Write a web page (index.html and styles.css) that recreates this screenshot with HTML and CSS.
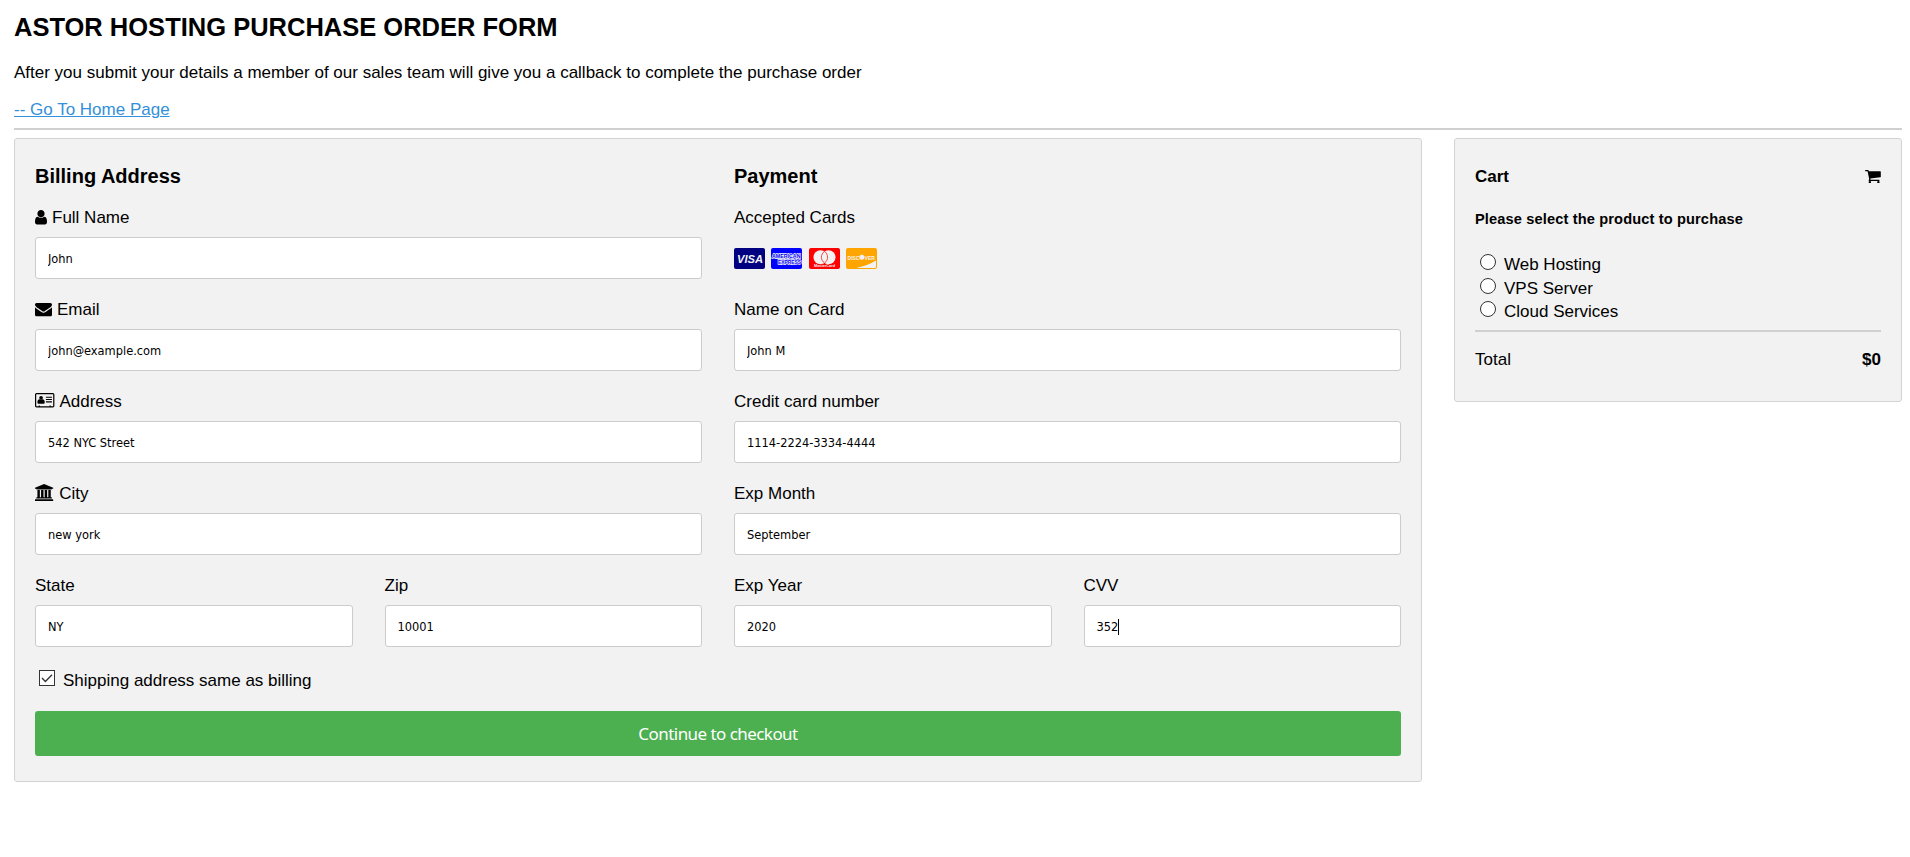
FILE: index.html
```html
<!DOCTYPE html>
<html lang="en">
<head>
<meta charset="utf-8">
<title>Astor Hosting Purchase Order Form</title>
<link rel="stylesheet" href="styles.css">
</head>
<body>
<header class="page-header">
  <h2 class="title"><span>ASTOR HOSTING PURCHASE ORDER FORM</span></h2>
  <p class="intro">After you submit your details a member of our sales team will give you a callback to complete the purchase order</p>
  <a class="home-link" href="#">-- Go To Home Page</a>
</header>
<hr class="rule">
<main class="layout">
  <form class="panel">
    <div class="columns">
      <section>
        <h3 class="heading">Billing Address</h3>
        <label class="label" for="fname"><svg class="icon icon-user" viewBox="256 128 1280 1536"><path d="M1536 1399q0 109-62.5 187t-150.5 78h-854q-88 0-150.5-78t-62.5-187q0-85 8.5-160.5t31.5-152 58.5-131 94-89 134.5-34.5q131 128 313 128t313-128q76 0 134.5 34.5t94 89 58.5 131 31.5 152 8.5 160.5zm-256-887q0 159-112.5 271.5t-271.5 112.5-271.5-112.5-112.5-271.5 112.5-271.5 271.5-112.5 271.5 112.5 112.5 271.5z"/></svg>Full Name</label>
        <input class="field" type="text" id="fname" value="John">
        <label class="label" for="email"><svg class="icon icon-mail" viewBox="0 256 1792 1408"><path d="M1792 710v794q0 66-47 113t-113 47h-1472q-66 0-113-47t-47-113v-794q44 49 101 87 362 246 497 345 57 42 92.5 65.5t94.5 48 110 24.5h2q51 0 110-24.5t94.5-48 92.5-65.5q170-123 498-345 57-39 100-87zm0-294q0 79-49 151t-122 123q-376 261-468 325-10 7-42.5 31t-54 38.5-52 32.5-57.5 27-50 9h-2q-23 0-50-9t-57.5-27-52-32.5-54-38.5-42.5-31q-91-64-262-182.5t-205-142.5q-62-42-117-115.5t-55-136.5q0-78 41.5-130t118.5-52h1472q65 0 112.5 47t47.5 113z"/></svg>Email</label>
        <input class="field" type="text" id="email" value="john@example.com">
        <label class="label" for="adr"><svg class="icon icon-card" viewBox="0 0 2048 1536"><path fill-rule="evenodd" d="M160 0h1728q66 0 113 47t47 113v1216q0 66-47 113t-113 47H160q-66 0-113-47T0 1376V160Q0 94 47 47T160 0zM160 128q-32 0-32 32v1216q0 32 32 32h224v-96h128v96h1024v-96h128v96h224q32 0 32-32V160q0-32-32-32z"/><circle cx="640" cy="512" r="195"/><path d="M512 660q128 100 256 0 256-10 256 330 0 130-110 130H366q-110 0-110-130 0-340 256-330zM1152 384h640v110h-640zM1152 630h640v110h-640zM1152 880h640v110h-640z"/></svg>Address</label>
        <input class="field" type="text" id="adr" value="542 NYC Street">
        <label class="label" for="city"><svg class="icon icon-city" viewBox="0 0 1920 1792"><path d="M960 0l960 384v128h-128q0 26-20.5 45t-48.5 19h-1526q-28 0-48.5-19t-20.5-45h-128v-128zm-704 640h256v768h128v-768h256v768h128v-768h256v768h128v-768h256v768h59q28 0 48.5 19t20.5 45v64h-1664v-64q0-26 20.5-45t48.5-19h59v-768zm1595 960q28 0 48.5 19t20.5 45v128h-1920v-128q0-26 20.5-45t48.5-19h1782z"/></svg>City</label>
        <input class="field" type="text" id="city" value="new york">
        <div class="columns">
          <div><label class="label" for="state">State</label><input class="field" type="text" id="state" value="NY"></div>
          <div><label class="label" for="zip">Zip</label><input class="field" type="text" id="zip" value="10001"></div>
        </div>
      </section>
      <section>
        <h3 class="heading">Payment</h3>
        <div class="label">Accepted Cards</div>
        <div class="cards">
          <svg class="card visa" viewBox="0 0 31 21"><rect width="31" height="21" rx="2"/><text x="3" y="14.7" textLength="26" lengthAdjust="spacingAndGlyphs" font-size="11.5" font-style="italic">VISA</text></svg>
          <svg class="card amex" viewBox="0 0 31 21"><rect width="31" height="21" rx="2"/><text x="1" y="9.6" textLength="28.5" lengthAdjust="spacingAndGlyphs" font-size="6">AMERICAN</text><text x="7" y="15.6" textLength="23" lengthAdjust="spacingAndGlyphs" font-size="5.6">EXPRESS</text></svg>
          <svg class="card master" viewBox="0 0 31 21"><rect width="31" height="21" rx="2"/><circle class="mark" cx="11.5" cy="9.2" r="7"/><circle class="mark" cx="19.5" cy="9.2" r="7"/><path class="lens" d="M15.5 3.4a7 7 0 0 1 0 11.6a7 7 0 0 1 0-11.6z"/><text x="5" y="19" textLength="21" lengthAdjust="spacingAndGlyphs" font-size="2.8">MasterCard</text></svg>
          <svg class="card discover" viewBox="0 0 31 21"><rect width="31" height="21" rx="2"/><path class="mark" d="M30 12.5v6.5a1 1 0 0 1-1 1H10.5Q22 17.5 30 12.5z"/><text x="1.6" y="11.5" textLength="12" lengthAdjust="spacingAndGlyphs" font-size="6">DISC</text><circle class="mark" cx="15.8" cy="9.3" r="2.5"/><text x="18.5" y="11.5" textLength="10.5" lengthAdjust="spacingAndGlyphs" font-size="6">VER</text></svg>
        </div>
        <label class="label" for="cname">Name on Card</label>
        <input class="field" type="text" id="cname" value="John M">
        <label class="label" for="ccnum">Credit card number</label>
        <input class="field" type="text" id="ccnum" value="1114-2224-3334-4444">
        <label class="label" for="expmonth">Exp Month</label>
        <input class="field" type="text" id="expmonth" value="September">
        <div class="columns">
          <div><label class="label" for="expyear">Exp Year</label><input class="field" type="text" id="expyear" value="2020"></div>
          <div><label class="label" for="cvv">CVV</label><div class="field focused" id="cvv">352<span class="caret"></span></div></div>
        </div>
      </section>
    </div>
    <label class="same"><svg class="check" viewBox="0 0 16 16"><rect x=".5" y=".5" width="15" height="15"/><path d="M3 8l3.4 3.5L13 4.8"/></svg>Shipping address same as billing</label>
    <button class="submit" type="button"><span>Continue to checkout</span></button>
  </form>
  <aside class="panel cart">
    <h4 class="cart-title">Cart<svg class="cart-icon" viewBox="64 256 1664 1408"><path d="M704 1536q0 52-38 90t-90 38-90-38-38-90 38-90 90-38 90 38 38 90zm896 0q0 52-38 90t-90 38-90-38-38-90 38-90 90-38 90 38 38 90zm128-1088v512q0 24-16.5 42.5t-40.5 21.5l-1044 122q13 60 13 70 0 16-24 64h920q26 0 45 19t19 45-19 45-45 19h-1024q-26 0-45-19t-19-45q0-11 8-31.5t16-36 21.5-40 15.5-29.5l-177-823h-204q-26 0-45-19t-19-45 19-45 45-19h256q16 0 28.5 6.5t19.5 15.5 13 24.5 8 26 5.5 29.5 4.5 26h1201q26 0 45 19t19 45z"/></svg></h4>
    <h5 class="cart-note">Please select the product to purchase</h5>
    <div class="options">
      <label class="option"><span class="radio"></span>Web Hosting</label>
      <label class="option"><span class="radio"></span>VPS Server</label>
      <label class="option"><span class="radio"></span>Cloud Services</label>
    </div>
    <hr class="rule">
    <p class="total">Total<b>$0</b></p>
  </aside>
</main>
</body>
</html>
```
FILE: styles.css
```css
* { box-sizing: border-box; }

body {
  margin: 0;
  padding: 13px 8px 0 14px;
  font: 17px/20px "Liberation Sans", Arial, sans-serif;
  color: #000;
  background: #fff;
}

.title { margin: 0 0 21px; font-size: 25.5px; line-height: 29px; }
.intro { margin: 0 0 17px; }
.home-link { display: block; width: max-content; color: #3490d8; }
.rule { height: 2px; margin: 8px 0 8px; border: 0; background: #d0d0d0; }

.layout { display: grid; grid-template-columns: 1408px 448px; gap: 32px; align-items: start; }
.panel { padding: 5px 20px 25px; background: #f2f2f2; border: 1px solid #d3d3d3; border-radius: 3px; }
.columns { display: grid; grid-template-columns: 1fr 1fr; gap: 32px; }

.heading { margin: 21px 0 20px; font-size: 20px; line-height: 23px; }
.label { display: block; height: 20px; margin-bottom: 9px; line-height: 20px; white-space: nowrap; }
.field {
  display: block;
  width: 100%;
  height: 42px;
  margin: 0 0 21px;
  padding: 12px;
  border: 1px solid #ccc;
  border-radius: 3px;
  background: #fff;
  color: #000;
  font: 12.7px/16px "DejaVu Sans Condensed", "DejaVu Sans", sans-serif;
}
.focused { display: flex; align-items: center; padding-top: 13px; padding-bottom: 11px; }
.caret { width: 1px; height: 16px; background: #000; }

.icon { margin-right: 5px; overflow: visible; }
.icon-user { width: 12px; height: 14.5px; vertical-align: -1px; }
.icon-mail { width: 17px; height: 13.4px; vertical-align: -1px; }
.icon-card { width: 19.4px; height: 14.6px; vertical-align: -1px; }
.icon-city { width: 18.2px; height: 17px; margin-right: 6px; vertical-align: -2px; }

.cards { display: flex; gap: 6.4px; height: 63px; padding-top: 11px; }
.card { width: 31px; height: 21px; overflow: visible; }
.card text { fill: #f2f2f2; font-family: "Liberation Sans", Arial, sans-serif; font-weight: 700; }
.mark { fill: #f2f2f2; }
.visa rect { fill: navy; }
.amex rect { fill: blue; }
.amex text { fill: blue; stroke: #f2f2f2; stroke-width: 1.5; paint-order: stroke; }
.master rect { fill: red; }
.master .lens { fill: #f2f2f2; stroke: red; stroke-width: .7; }
.discover rect { fill: orange; }

.same { display: flex; height: 24px; padding-left: 4px; line-height: 26px; gap: 8px; }
.check { width: 16px; height: 16px; margin-top: 2px; fill: #fff; stroke: #333; }
.check path { fill: none; stroke-width: 1.3; }
.submit {
  display: block;
  width: 100%;
  height: 45px;
  margin-top: 19px;
  border: 0;
  border-radius: 3px;
  background: #4caf50;
  color: #fff;
  font: 17px/21px "Noto Sans", sans-serif;
  letter-spacing: -.55px;
}

.cart { height: 264px; }
.cart-title { display: flex; justify-content: space-between; margin: 23px 0 24px; font-size: 17px; line-height: 20px; }
.cart-icon { width: 15.8px; height: 13.4px; margin-top: 3px; }
.cart-note { margin: 0 0 25px; font-size: 14.6px; line-height: 17px; letter-spacing: .14px; }
.options { padding-left: 5px; }
.option { display: flex; gap: 8px; height: 23.6px; line-height: 24px; }
.radio { width: 16px; height: 16px; margin-top: 1px; border: 1px solid #333; border-radius: 50%; background: #fff; }
.cart .rule { margin: 6px 0 18px; }
.total { display: flex; justify-content: space-between; margin: 0; }
```
